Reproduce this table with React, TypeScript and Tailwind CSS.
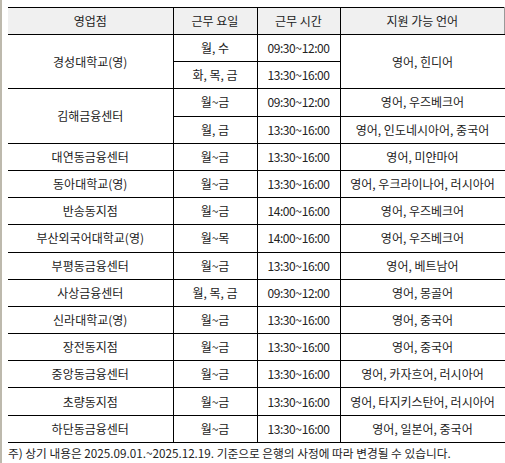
import React from "react";

type Row = {
  branch: string;
  span?: number;
  day: string;
  time: string;
  lang: string;
  langSpan?: number;
  skipBranch?: boolean;
  skipLang?: boolean;
};

const rows: Row[] = [
  { branch: "경성대학교(영)", span: 2, day: "월, 수", time: "09:30~12:00", lang: "영어, 힌디어", langSpan: 2 },
  { branch: "", skipBranch: true, day: "화, 목, 금", time: "13:30~16:00", lang: "", skipLang: true },
  { branch: "김해금융센터", span: 2, day: "월~금", time: "09:30~12:00", lang: "영어, 우즈베크어" },
  { branch: "", skipBranch: true, day: "월, 금", time: "13:30~16:00", lang: "영어, 인도네시아어, 중국어" },
  { branch: "대연동금융센터", day: "월~금", time: "13:30~16:00", lang: "영어, 미얀마어" },
  { branch: "동아대학교(영)", day: "월~금", time: "13:30~16:00", lang: "영어, 우크라이나어, 러시아어" },
  { branch: "반송동지점", day: "월~금", time: "14:00~16:00", lang: "영어, 우즈베크어" },
  { branch: "부산외국어대학교(영)", day: "월~목", time: "14:00~16:00", lang: "영어, 우즈베크어" },
  { branch: "부평동금융센터", day: "월~금", time: "13:30~16:00", lang: "영어, 베트남어" },
  { branch: "사상금융센터", day: "월, 목, 금", time: "09:30~12:00", lang: "영어, 몽골어" },
  { branch: "신라대학교(영)", day: "월~금", time: "13:30~16:00", lang: "영어, 중국어" },
  { branch: "장전동지점", day: "월~금", time: "13:30~16:00", lang: "영어, 중국어" },
  { branch: "중앙동금융센터", day: "월~금", time: "13:30~16:00", lang: "영어, 카자흐어, 러시아어" },
  { branch: "초량동지점", day: "월~금", time: "13:30~16:00", lang: "영어, 타지키스탄어, 러시아어" },
  { branch: "하단동금융센터", day: "월~금", time: "13:30~16:00", lang: "영어, 일본어, 중국어" },
];

const cell = "border-b border-black text-center align-middle p-0";

export default function App() {
  return (
    <div
      className="flex min-h-[463px] bg-white text-[12px] text-[#222]"
      style={{ fontFamily: '"Noto Sans CJK KR", "Noto Sans", sans-serif' }}
    >
      <div className="w-[2px] shrink-0 bg-[#bdb9ad]" />
      <div className="flex-1 pl-[6px] pt-[7px]">
        <table className="w-full table-fixed border-collapse">
          <colgroup>
            <col className="w-[165px]" />
            <col className="w-[84px]" />
            <col className="w-[83px]" />
            <col />
          </colgroup>
          <thead>
            <tr className="h-[27px] bg-[#f0f0f0]">
              <th className={`${cell} border-t font-normal`}>영업점</th>
              <th className={`${cell} border-t border-l font-normal`}>근무 요일</th>
              <th className={`${cell} border-t border-l font-normal`}>근무 시간</th>
              <th className={`${cell} border-t border-l border-r border-r-[#999] font-normal`}>지원 가능 언어</th>
            </tr>
          </thead>
          <tbody>
            {rows.map((r, i) => (
              <tr key={i} className="h-[27.2px]">
                {!r.skipBranch && (
                  <td className={cell} rowSpan={r.span ?? 1}>
                    {r.branch}
                  </td>
                )}
                <td className={`${cell} border-l`}>{r.day}</td>
                <td className={`${cell} border-l tracking-[-0.4px]`}>{r.time}</td>
                {!r.skipLang && (
                  <td className={`${cell} border-l whitespace-nowrap`} rowSpan={r.langSpan ?? 1}>
                    {r.lang}
                  </td>
                )}
              </tr>
            ))}
          </tbody>
        </table>
        <p className="mt-[1px] whitespace-nowrap text-[11.7px] leading-[18px]">
          주) 상기 내용은 2025.09.01.~2025.12.19. 기준으로 은행의 사정에 따라 변경될 수 있습니다.
        </p>
      </div>
    </div>
  );
}
